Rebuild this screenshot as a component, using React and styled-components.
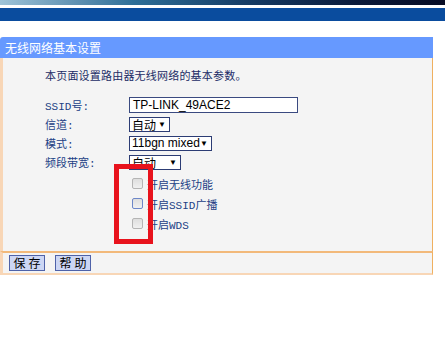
import styled, { createGlobalStyle } from "styled-components";

const GlobalStyle = createGlobalStyle`
    html, body {
        margin: 0;
        padding: 0;
        background: #ffffff;
        font-family: "Noto Sans CJK SC", "Liberation Sans", sans-serif;
    }
`;

export default function App() {
    return (
        <>
            <GlobalStyle />
            <StyledPage>
                <StyledBanner />
                <StyledNavBar />
                <StyledPanel>
                    <StyledPanelHeader>无线网络基本设置</StyledPanelHeader>
                    <StyledPanelBody>
                        <StyledIntro>本页面设置路由器无线网络的基本参数。</StyledIntro>
                        <StyledForm>
                            <StyledRow>
                                <StyledLabel>SSID号:</StyledLabel>
                                <StyledInput>TP-LINK_49ACE2</StyledInput>
                            </StyledRow>
                            <StyledRow>
                                <StyledLabel>信道:</StyledLabel>
                                <StyledSelect $width={41}>自动<StyledArrow>▼</StyledArrow></StyledSelect>
                            </StyledRow>
                            <StyledRow>
                                <StyledLabel>模式:</StyledLabel>
                                <StyledSelect $width={83}>11bgn mixed<StyledArrow>▼</StyledArrow></StyledSelect>
                            </StyledRow>
                            <StyledRow>
                                <StyledLabel>频段带宽:</StyledLabel>
                                <StyledSelect $width={52}>自动<StyledArrow>▼</StyledArrow></StyledSelect>
                            </StyledRow>
                            <StyledChecks>
                                <StyledCheckRow>
                                    <StyledCheckbox />
                                    <StyledCheckText>开启无线功能</StyledCheckText>
                                </StyledCheckRow>
                                <StyledCheckRow>
                                    <StyledCheckbox $focused />
                                    <StyledCheckText>开启SSID广播</StyledCheckText>
                                </StyledCheckRow>
                                <StyledCheckRow>
                                    <StyledCheckbox />
                                    <StyledCheckText>开启WDS</StyledCheckText>
                                </StyledCheckRow>
                                <StyledMark />
                            </StyledChecks>
                        </StyledForm>
                    </StyledPanelBody>
                    <StyledButtonBar>
                        <StyledButton>保存</StyledButton>
                        <StyledButton>帮助</StyledButton>
                    </StyledButtonBar>
                </StyledPanel>
            </StyledPage>
        </>
    )
};


const StyledPage = styled.div`
    width: 445px;
    height: 352px;
    overflow: hidden;
    background: #ffffff;
`;

const StyledBanner = styled.div`
    height: 5px;
    background: linear-gradient(90deg, #9fc4d8 0%, #5d8fb0 18%, #2e6f98 30%, #173d66 55%, #0b1a3a 80%, #070c24 100%);
`;

const StyledNavBar = styled.div`
    margin-top: 3px;
    height: 13px;
    background: #0a4c9e;
`;

const StyledPanel = styled.section`
    margin-top: 16px;
    width: 433px;
`;

const StyledPanelHeader = styled.div`
    height: 21px;
    line-height: 21px;
    padding-left: 5px;
    background: #6699ff;
    color: #ffffff;
    font-size: 12px;
    border-radius: 3px 0 0 0;
`;

const StyledPanelBody = styled.div`
    background: #f4f4f4;
    border-left: 3px solid #f8d6b6;
    border-right: 1px solid #efb060;
    padding: 10px 0 0 42px;
    height: 183px;
`;

const StyledIntro = styled.p`
    margin: 0;
    font-size: 11px;
    line-height: 14px;
    letter-spacing: 0.2px;
    color: #1b2c66;
`;

const StyledForm = styled.div`
    margin-top: 15px;
    display: flex;
    flex-direction: column;
    gap: 3px;
`;

const StyledRow = styled.div`
    display: flex;
    align-items: center;
    height: 16px;
`;

const StyledLabel = styled.span`
    width: 84px;
    font-family: "Liberation Mono", "Noto Sans CJK SC", monospace;
    font-size: 11px;
    color: #223f85;
`;

const StyledInput = styled.div`
    box-sizing: border-box;
    width: 169px;
    height: 16px;
    border: 1px solid #3a4a80;
    background: #ffffff;
    font-family: "Liberation Sans", sans-serif;
    font-size: 12px;
    line-height: 14px;
    padding-left: 3px;
    color: #000000;
`;

const StyledSelect = styled.div`
    box-sizing: border-box;
    width: ${p => p.$width}px;
    height: 15px;
    border: 1px solid #2c3c74;
    background: #ffffff;
    display: flex;
    align-items: center;
    justify-content: space-between;
    padding: 0 3px 0 2px;
    font-family: "Liberation Sans", "Noto Sans CJK SC", sans-serif;
    font-size: 12px;
    color: #000000;
`;

const StyledArrow = styled.span`
    font-size: 8px;
`;

const StyledChecks = styled.div`
    position: relative;
    margin-top: 5px;
    padding-left: 3px;
    display: flex;
    flex-direction: column;
    gap: 9px;
`;

const StyledCheckRow = styled.div`
    display: flex;
    align-items: center;
    height: 11px;
    padding-left: 84px;
`;

const StyledCheckbox = styled.span`
    box-sizing: border-box;
    width: 11px;
    height: 11px;
    border-radius: 2px;
    border: 1px solid ${p => p.$focused ? "#6d87c8" : "#b4b4b4"};
    background: linear-gradient(#dedede, #f0f0f0);
`;

const StyledCheckText = styled.span`
    margin-left: 4px;
    font-family: "Liberation Mono", "Noto Sans CJK SC", monospace;
    font-size: 11px;
    color: #223f85;
`;

const StyledMark = styled.div`
    position: absolute;
    left: 69px;
    top: -14px;
    width: 29px;
    height: 70px;
    border: 5px solid #e8121c;
`;

const StyledButtonBar = styled.div`
    display: flex;
    gap: 10px;
    align-items: center;
    height: 20px;
    padding-left: 6px;
    background: #f4f4f4;
    border-top: 2px solid #f2b97a;
    border-bottom: 2px solid #f8d6b6;
    border-left: 3px solid #f8d6b6;
    border-right: 1px solid #efb060;
`;

const StyledButton = styled.button`
    box-sizing: border-box;
    width: 36px;
    height: 16px;
    padding: 0;
    border: 1px solid #4f62a8;
    background: #ccd6f4;
    font-family: "Noto Sans CJK SC", sans-serif;
    font-size: 12px;
    line-height: 14px;
    letter-spacing: 3px;
    text-indent: 3px;
    color: #000000;
`;
